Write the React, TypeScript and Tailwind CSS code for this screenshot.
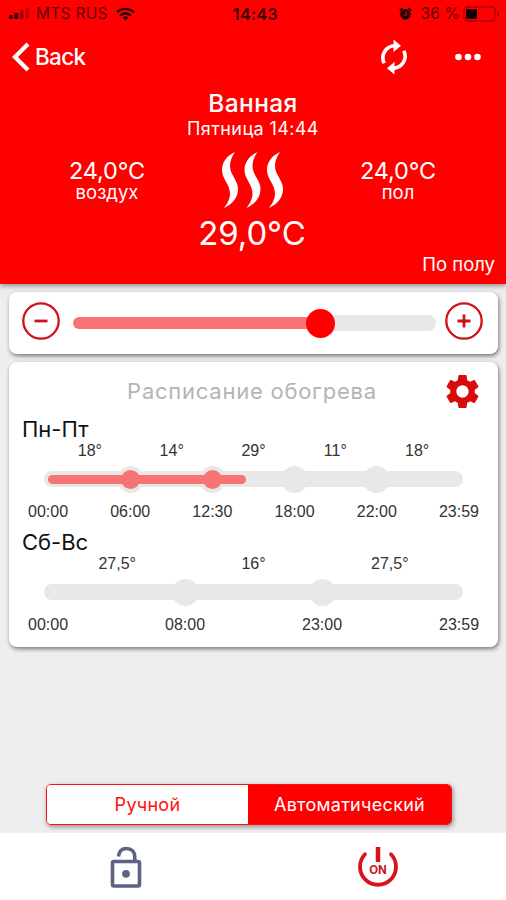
import { useState } from 'react'
import { MdSettings } from 'react-icons/md'

const weekdays = {
  label: 'Пн-Пт',
  temps: ['18°', '14°', '29°', '11°', '18°'],
  times: ['00:00', '06:00', '12:30', '18:00', '22:00', '23:59'],
  // share of the track that is already passed
  progress: 48.2,
}

const weekend = {
  label: 'Сб-Вс',
  temps: ['27,5°', '16°', '27,5°'],
  times: ['00:00', '08:00', '23:00', '23:59'],
  progress: 0,
}

type Day = typeof weekdays

function StatusBar() {
  return (
    <div className="flex h-7 items-center pr-[6px] pl-2 text-[#5a0000]">
      <div className="flex flex-1 items-center">
        <svg width="24" height="14" viewBox="0 0 24 14">
          <rect x="1" y="8" width="3.6" height="4" rx="1" fill="#1a0000" />
          <rect x="6.5" y="6" width="3.8" height="6" rx="1" fill="#1a0000" />
          <rect x="12" y="3.5" width="3.6" height="8.5" rx="1" fill="#a80000" />
          <rect x="17.5" y="1" width="3.6" height="11" rx="1" fill="#b80000" />
        </svg>
        <span className="ml-1 text-[15.5px] tracking-[0.3px]">MTS RUS</span>
        <svg className="ml-2" width="19" height="14" viewBox="0 0 19 14" fill="none" stroke="#250000" strokeWidth="2.3">
          <path d="M1 5.2a12.4 12.4 0 0 1 17 0" />
          <path d="M4.2 8.6a7.8 7.8 0 0 1 10.6 0" />
          <path d="M9.5 13.5 6.6 10.6a4.3 4.3 0 0 1 5.8 0Z" fill="#250000" stroke="none" />
        </svg>
      </div>
      <span className="pl-[3px] text-[16px] font-semibold tracking-[0.4px] text-[#300000]">14:43</span>
      <div className="flex flex-1 items-center justify-end">
        <svg width="13" height="14" viewBox="0 0 13 14">
          <circle cx="6.5" cy="7.3" r="5.3" fill="#250000" />
          <path d="M.8 3.6 3.5 1M12.2 3.6 9.5 1" stroke="#250000" strokeWidth="2" />
          <path d="M7.4 4.4v3.4H4.6" fill="none" stroke="#d00000" strokeWidth="1.2" />
        </svg>
        <span className="ml-2 text-[15.5px] tracking-[0.2px]">36 %</span>
        <svg className="ml-[3px]" width="37" height="16" viewBox="0 0 37 16">
          <rect x="1" y="1" width="31" height="14" rx="3.5" fill="none" stroke="#a00000" strokeWidth="1.3" />
          <rect x="3" y="3.2" width="11" height="9.6" fill="#100000" />
          <path d="M34 5.5a2.6 2.6 0 0 1 0 5Z" fill="#a00000" />
        </svg>
      </div>
    </div>
  )
}

function SteamIcon() {
  const wave = 'M13 0C4 4 0 11 0 18c0 9 8 14 8 24 0 5-3 10-6 14C11 52 16 45 16 37 16 28 8 23 8 14 8 9 10 4 13 0Z'
  return (
    <svg width="62" height="57" viewBox="0 0 62 57" fill="#fff">
      <path d={wave} />
      <path d={wave} transform="translate(22.5 0)" />
      <path d={wave} transform="translate(45 0)" />
    </svg>
  )
}

function Reading({ value, label }: { value: string; label: string }) {
  return (
    <div className="flex flex-col items-center pt-[23px]">
      <span className="text-[23.5px] leading-[23px] tracking-[-0.2px]">{value}</span>
      <span className="text-[18.5px] leading-5">{label}</span>
    </div>
  )
}

function Schedule({ day }: { day: Day }) {
  return (
    <div className="h-[113px]">
      <div className="pl-[13px] text-[22px] leading-[26px] text-[#111]">{day.label}</div>
      <div className="mr-10 ml-[40px] flex h-[18px] items-center font-['Liberation_Sans',sans-serif] text-[16px] text-[#333]">
        {day.temps.map((t, i) => (
          <span key={i} className="flex-1 text-center">{t}</span>
        ))}
      </div>
      <div className="relative mx-[35px] mt-[11px] flex h-4 items-center justify-between rounded-full bg-[#e8e8e8] px-1">
        {day.times.map((t, i) => (
          <span key={t} className="flex w-0 justify-center">
            {i > 0 && i < day.times.length - 1 && (
              <span className="size-[27px] shrink-0 rounded-full bg-[#e8e8e8]" />
            )}
          </span>
        ))}
        {day.progress > 0 && (
          <div className="absolute inset-x-1 flex h-[19px] items-center justify-between">
            <span
              className="absolute left-0 h-[9px] rounded-full bg-[#f87474]"
              style={{ width: `${day.progress}%` }}
            />
            {day.times.map((t, i) => (
              <span key={t} className="relative flex w-0 justify-center">
                {i > 0 && (i / (day.times.length - 1)) * 100 < day.progress && (
                  <span className="size-[19px] shrink-0 rounded-full bg-[#f87474]" />
                )}
              </span>
            ))}
          </div>
        )}
      </div>
      <div className="mx-[39px] mt-4 flex h-[18px] items-center justify-between font-['Liberation_Sans',sans-serif] text-[16px] text-[#333]">
        {day.times.map((t) => (
          <span key={t} className="flex w-0 justify-center">{t}</span>
        ))}
      </div>
    </div>
  )
}

export default function App() {
  const [auto, setAuto] = useState(true)

  return (
    <div className="flex h-[900px] w-[506px] flex-col overflow-hidden bg-[#eeeeee] font-['Inter',sans-serif]">
      {/* Header */}
      <header className="h-[284px] shrink-0 bg-[#ff0000] text-white shadow-[0_2px_5px_rgba(0,0,0,0.4)]">
        <StatusBar />
        <div className="flex h-[58px] items-center pr-[25px] pl-3">
          <svg width="18" height="30" viewBox="0 0 18 30" fill="none" stroke="#fff" strokeWidth="4.2">
            <path d="M16 2 3 15l13 13" />
          </svg>
          <span className="ml-[5px] flex-1 text-[22.5px] font-medium tracking-[-0.7px]">Back</span>
          <svg className="mr-[46px]" width="30" height="36" viewBox="0 0 30 36" fill="none" stroke="#fff" strokeWidth="3.6">
            <path d="M5.2 24.2A12 12 0 0 1 16 6.8" />
            <path d="M24.8 11.8A12 12 0 0 1 14 29.2" />
            <path d="M14.5.5 22 6.8l-7.5 6.3ZM15.5 22.9 8 29.2l7.5 6.3Z" fill="#fff" stroke="none" />
          </svg>
          <svg width="26" height="8" viewBox="0 0 26 8" fill="#fff">
            <circle cx="3.5" cy="4" r="3.3" />
            <circle cx="13" cy="4" r="3.3" />
            <circle cx="22.5" cy="4" r="3.3" />
          </svg>
        </div>
        <h1 className="text-center text-[24.5px] leading-[35px] font-medium tracking-[0.4px]">Ванная</h1>
        <div className="text-center text-[18px] leading-[15px] tracking-[0.4px]">Пятница 14:44</div>
        <div className="mr-px grid h-[81px] grid-cols-[145px_146px_145px] justify-center">
          <Reading value="24,0°C" label="воздух" />
          <div className="flex justify-center pt-4">
            <SteamIcon />
          </div>
          <Reading value="24,0°C" label="пол" />
        </div>
        <div className="pr-0.5 text-center text-[33px] leading-[33px] tracking-[-0.1px]">29,0°C</div>
        <div className="pr-[11px] text-right text-[18.5px] leading-[29px]">По полу</div>
      </header>

      {/* Target temperature */}
      <section className="mt-2 mr-2 ml-[9px] flex h-[62px] shrink-0 items-center rounded-lg bg-white pr-[15px] pl-[13px] shadow-[1px_2px_4px_rgba(0,0,0,0.5)]">
        <button className="mb-1 rounded-full" aria-label="Decrease">
          <svg width="38" height="38" viewBox="0 0 38 38" fill="none" stroke="#d0101a">
            <circle cx="19" cy="19" r="17.7" strokeWidth="2.3" />
            <path d="M12.500 19h13" strokeWidth="2.8" />
          </svg>
        </button>
        <div className="relative mr-[9px] ml-[13px] flex h-4 flex-1 items-center">
          <div className="h-3 w-[247px] rounded-l-full bg-[#f87474]" />
          <div className="h-4 flex-1 rounded-r-full bg-[#e8e8e8]" />
          <div className="absolute left-[233px] size-[29px] rounded-full bg-[#ff0000]" />
        </div>
        <button className="mb-1 rounded-full" aria-label="Increase">
          <svg width="38" height="38" viewBox="0 0 38 38" fill="none" stroke="#d0101a">
            <circle cx="19" cy="19" r="17.7" strokeWidth="2.3" />
            <path d="M12.5 19h13M19 12.5v13" strokeWidth="2.8" />
          </svg>
        </button>
      </section>

      {/* Schedule */}
      <section className="mt-2 mr-2 ml-[9px] h-[285px] shrink-0 rounded-lg bg-white shadow-[1px_2px_4px_rgba(0,0,0,0.5)]">
        <div className="flex h-[54px] items-center pt-1 pr-[15px]">
          <h2 className="flex-1 pl-[53px] text-center text-[22px] tracking-[0.75px] text-[#b4b4b4]">Расписание обогрева</h2>
          <MdSettings className="size-[41px] text-[#d90a0a]" />
        </div>
        <Schedule day={weekdays} />
        <Schedule day={weekend} />
      </section>

      {/* Mode */}
      <div className="mt-[137px] ml-[46px] flex h-[41px] w-[406px] shrink-0 overflow-hidden rounded-[5px] border border-[#ff1010] bg-white text-[18px] tracking-[0.3px] shadow-[1px_2px_5px_rgba(0,0,0,0.4)]">
        <button
          className={`w-[201px] ${auto ? 'bg-white text-[#ff1010]' : 'bg-[#ff0000] text-white'}`}
          onClick={() => setAuto(false)}
        >
          Ручной
        </button>
        <button
          className={`flex-1 ${auto ? 'bg-[#ff0000] text-white' : 'bg-white text-[#ff1010]'}`}
          onClick={() => setAuto(true)}
        >
          Автоматический
        </button>
      </div>

      <footer className="mt-2 grid flex-1 grid-cols-2 items-center bg-white pr-0.5">
        <button className="flex justify-center" aria-label="Lock">
          <svg width="32" height="42" viewBox="0 0 32 42" fill="none" stroke="#5d6483" strokeWidth="3.6">
            <rect x="2.5" y="15.5" width="27" height="24.500" rx="1.5" />
            <path d="M8.5 10.5C9 5.5 12 2.5 16.5 2.5c5 0 8.3 3.3 8.3 8.5v4.5" />
            <circle cx="16" cy="27.8" r="3.9" fill="#5d6483" stroke="none" />
          </svg>
        </button>
        <button className="flex justify-center" aria-label="Power">
          <svg width="42" height="42" viewBox="0 0 42 42" fill="none" stroke="#d81218" strokeWidth="3.8">
            <path d="M8 8.3a18 18 0 1 0 26 0" strokeLinecap="round" />
            <path d="M21 1v15" strokeWidth="4.5" />
            <text x="21" y="28" textAnchor="middle" fontSize="11.5" fontWeight="700" fill="#c8141c" stroke="none">ON</text>
          </svg>
        </button>
      </footer>
    </div>
  )
}
